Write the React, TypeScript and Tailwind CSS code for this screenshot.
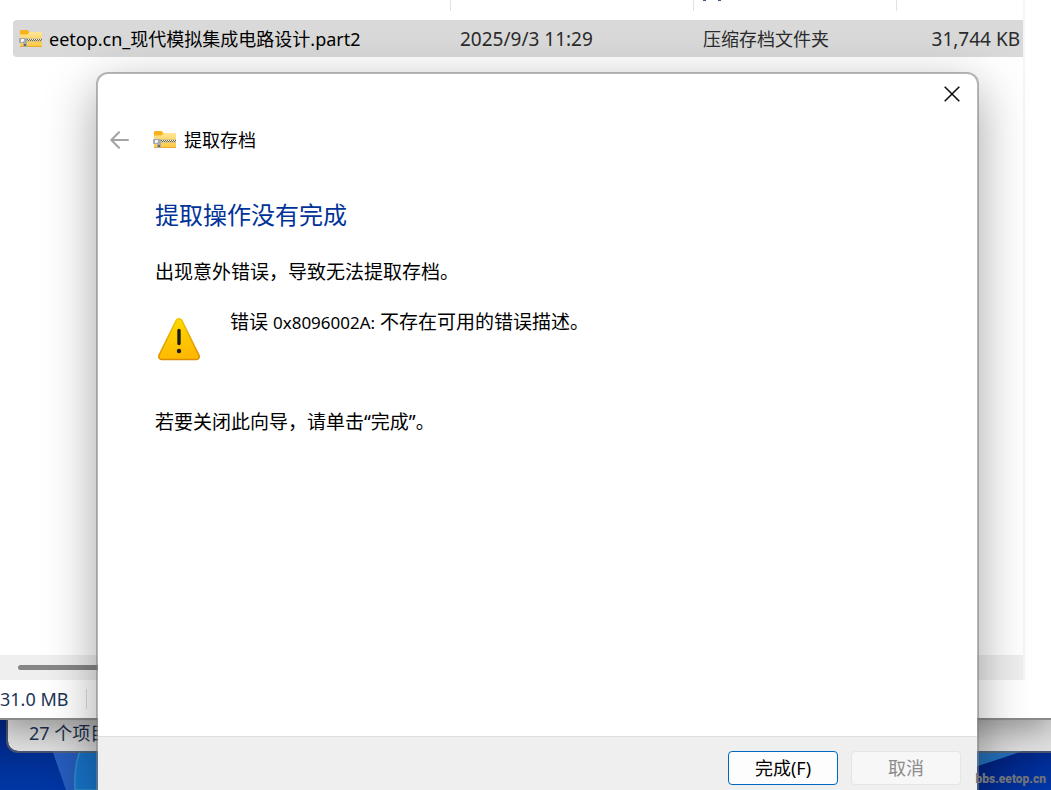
import React from "react";

const columns = [
  { key: "name", width: "w-[438px]" },
  { key: "date", width: "w-[243px]" },
  { key: "type", width: "w-[203px]" },
];

function ZipFolderIcon() {
  return (
    <svg width="24" height="20" viewBox="0 0 24 20" aria-hidden="true" className="shrink-0">
      <defs>
        <linearGradient id="folder" x1="0" y1="0" x2="0" y2="1">
          <stop offset="0" stopColor="#ffe596" />
          <stop offset="1" stopColor="#fcc83c" />
        </linearGradient>
      </defs>
      <path d="M1 2a1 1 0 0 1 1-1h6.500l2 2H22v4H1z" fill="#f9b21c" />
      <path d="M1 5.500h7.500L10.500 3H22a1 1 0 0 1 1 1v13a1 1 0 0 1-1 1H2a1 1 0 0 1-1-1z" fill="url(#folder)" />
      <path d="M1 17.500h22" stroke="#e6ad2e" strokeWidth="1" />
      <rect x="8" y="9" width="15" height="4" fill="#d9c48a" />
      <path d="M8 10.500h15" stroke="#f6eed6" strokeWidth="1" />
      <path d="M8 10.500h15" stroke="#6f6a58" strokeWidth="1" strokeDasharray="1 1" />
      <path d="M9 11.500h14" stroke="#6f6a58" strokeWidth="1" strokeDasharray="1 1" />
      <rect x="0" y="9" width="8" height="5" rx="1" fill="#a4a9ae" />
      <rect x="2" y="10" width="3" height="3" fill="#f4f5f6" />
      <rect x="4" y="12" width="4" height="6" rx="1" fill="#a9adb2" />
      <rect x="5" y="15" width="2" height="2" fill="#64686d" />
    </svg>
  );
}

function WarningIcon() {
  return (
    <svg width="44" height="44" viewBox="0 0 44 44" role="img" aria-label="警告" className="shrink-0">
      <defs>
        <linearGradient id="warn" x1="0" y1="0" x2="0.300" y2="1">
          <stop offset="0" stopColor="#ffdf00" />
          <stop offset="1" stopColor="#ffb900" />
        </linearGradient>
        <linearGradient id="warnEdge" x1="0" y1="0" x2="0" y2="1">
          <stop offset="0" stopColor="#f0c400" />
          <stop offset="1" stopColor="#dc8c00" />
        </linearGradient>
      </defs>
      <path
        d="M19.200 3.300a3.200 3.200 0 0 1 5.600 0L42 38.300a2.900 2.900 0 0 1-2.600 4.200H4.600A2.900 2.900 0 0 1 2 38.300z"
        fill="url(#warn)"
        stroke="url(#warnEdge)"
        strokeWidth="1.500"
      />
      <path d="M22 13.500v13" stroke="#1c1c1c" strokeWidth="3.400" strokeLinecap="round" />
      <circle cx="22" cy="34" r="2.200" fill="#1c1c1c" />
    </svg>
  );
}

function Wallpaper() {
  return (
    <svg
      aria-hidden="true"
      className="absolute inset-x-0 bottom-0 h-[72px] w-full"
      viewBox="0 0 1051 72"
      preserveAspectRatio="none"
    >
      <defs>
        <linearGradient id="sky" x1="0" y1="0" x2="0" y2="1">
          <stop offset="0" stopColor="#00237c" />
          <stop offset="1" stopColor="#0037a4" />
        </linearGradient>
        <linearGradient id="petal" x1="0" y1="0" x2="1" y2="0">
          <stop offset="0" stopColor="#2b5fc4" />
          <stop offset="1" stopColor="#1d56ac" />
        </linearGradient>
        <linearGradient id="night" x1="0" y1="0" x2="1" y2="1">
          <stop offset="0" stopColor="#001a6e" />
          <stop offset="1" stopColor="#0037a8" />
        </linearGradient>
      </defs>
      <rect width="1051" height="72" fill="url(#sky)" />
      <path d="M48 20 66 72H110V20z" fill="url(#petal)" />
      <path d="M84 26C76 38 74 54 75 72H110V26z" fill="#1872c8" stroke="#2e8ec6" strokeWidth="1.500" />
      <path d="M970 30H1030C1012 38 995 42 970 51z" fill="#2570bb" />
      <path d="M970 51C995 42 1012 38 1030 30H1051V72H970z" fill="url(#night)" />
    </svg>
  );
}

function Explorer() {
  return (
    <section className="absolute inset-x-0 top-0 bottom-[70px] flex flex-col border-b-2 border-[#8a8a8a] bg-white shadow-[0_10px_30px_rgba(0,0,0,0.35)]">
      <div className="flex min-h-0 flex-1">
        <div className="flex min-w-0 flex-1 flex-col">
          <div className="ml-[13px] flex h-[11px]">
            {columns.map((c) => (
              <div key={c.key} className={`${c.width} flex shrink-0 gap-3 border-r border-[#e2e2e2] pl-[9px]`}>
                {c.key === "type" && (
                  <>
                    <i className="h-px w-[3px] bg-[#43597a]" />
                    <i className="h-px w-[3px] bg-[#43597a]" />
                  </>
                )}
              </div>
            ))}
          </div>
          <div className="mt-[9px] ml-[13px] flex h-[37px] items-center rounded-l-sm bg-[#d9d9d9] pt-px text-[19px] text-[#2b2b2b]">
            <div className="flex w-[438px] shrink-0 items-center gap-[6px] pl-[6px] text-[18px] text-black">
              <ZipFolderIcon />
              <span>eetop.cn_现代模拟集成电路设计.part2</span>
            </div>
            <div className="w-[243px] shrink-0 pl-[9px]">2025/9/3 11:29</div>
            <div className="w-[203px] shrink-0 pl-[9px] text-[18px]">压缩存档文件夹</div>
            <div className="flex-1 pr-[3px] text-right whitespace-nowrap">31,744 KB</div>
          </div>
          <div className="flex-1" />
          <div className="flex h-[25px] items-center bg-[#efefef] pl-[18px]">
            <div className="h-[5px] w-3/4 rounded-full bg-[#868686]" />
          </div>
        </div>
        <div className="w-7 border-l-2 border-[#f5f5f5]" />
      </div>
      <div className="flex h-[38px] items-center text-[18px] text-[#1d3557]">
        <span>31.0 MB</span>
        <span className="ml-[18px] h-5 w-px bg-[#dcdcdc]" />
      </div>
    </section>
  );
}

function WizardDialog() {
  return (
    <section
      role="dialog"
      aria-labelledby="wizard-heading"
      className="absolute top-[72px] right-[72px] bottom-0 left-24 flex flex-col overflow-hidden rounded-t-xl border-2 border-b-0 border-[#7c7c7c]/55 bg-white bg-clip-padding text-[19px] leading-[26px] text-black shadow-[0_16px_50px_rgba(0,0,0,0.36)]"
    >
      <div className="flex justify-end pt-1 pr-[9px]">
        <button type="button" aria-label="关闭" className="flex size-8 items-center justify-center">
          <svg width="16" height="16" viewBox="0 0 16 16" stroke="#111" strokeWidth="1.600" aria-hidden="true">
            <path d="M.7.7l14.600 14.600M15.300.7.7 15.300" />
          </svg>
        </button>
      </div>
      <header className="mt-[15px] flex h-[30px] items-center pl-3">
        <button type="button" aria-label="返回" disabled className="flex w-5 items-center">
          <svg width="19" height="18" viewBox="0 0 19 18" fill="none" stroke="#a3a3a3" strokeWidth="2" strokeLinecap="round" strokeLinejoin="round" aria-hidden="true">
            <path d="M18 9H1.500M9 1.300 1.300 9 9 16.700" />
          </svg>
        </button>
        <span className="ml-[23px] flex items-center gap-[7px] text-[18px]">
          <ZipFolderIcon />
          提取存档
        </span>
      </header>
      <div className="flex-1 pl-[57px]">
        <h1 id="wizard-heading" className="mt-[42px] text-[24px] leading-[36px] text-[#003399]">
          提取操作没有完成
        </h1>
        <p className="mt-[26px]">出现意外错误，导致无法提取存档。</p>
        <div className="mt-6 flex gap-[29px] pl-[2px]">
          <div className="pt-[8px]">
            <WarningIcon />
          </div>
          <p>
            错误 <span className="text-[17px]">0x8096002A:</span> 不存在可用的错误描述。
          </p>
        </div>
        <p className="mt-12">若要关闭此向导，请单击“完成”。</p>
      </div>
      <footer className="flex h-[54px] justify-end gap-[13px] border-t border-[#dfdfdf] bg-[#efefef] pt-[14px] pr-4 text-[18px]">
        <button type="button" className="h-[34px] w-[110px] rounded border border-[#0067c0] bg-[#fdfdfd]">
          完成(F)
        </button>
        <button type="button" disabled className="h-[34px] w-[110px] rounded border border-[#e5e5e5] bg-[#f7f7f7] text-[#8c8c8c]">
          取消
        </button>
      </footer>
    </section>
  );
}

export default function App() {
  return (
    <main className="relative h-screen overflow-hidden bg-[#002c92] font-['Noto_Sans','Noto_Sans_CJK_SC',sans-serif]">
      <Wallpaper />
      <section className="absolute right-0 bottom-[37px] left-[6px] flex h-20 items-end rounded-bl-xl border-b-2 border-l-2 border-[#666]/70 bg-[#e2e2e2] bg-clip-padding pb-1 pl-[21px] text-[18px] leading-[28px] text-[#1d3557]">
        27 个项目
      </section>
      <Explorer />
      <WizardDialog />
      <span className="absolute right-[5px] bottom-0 font-['Liberation_Sans_Narrow','Roboto',sans-serif] text-[12px] leading-[22px] font-black text-[#6f7379]">
        bbs.eetop.cn
      </span>
    </main>
  );
}
